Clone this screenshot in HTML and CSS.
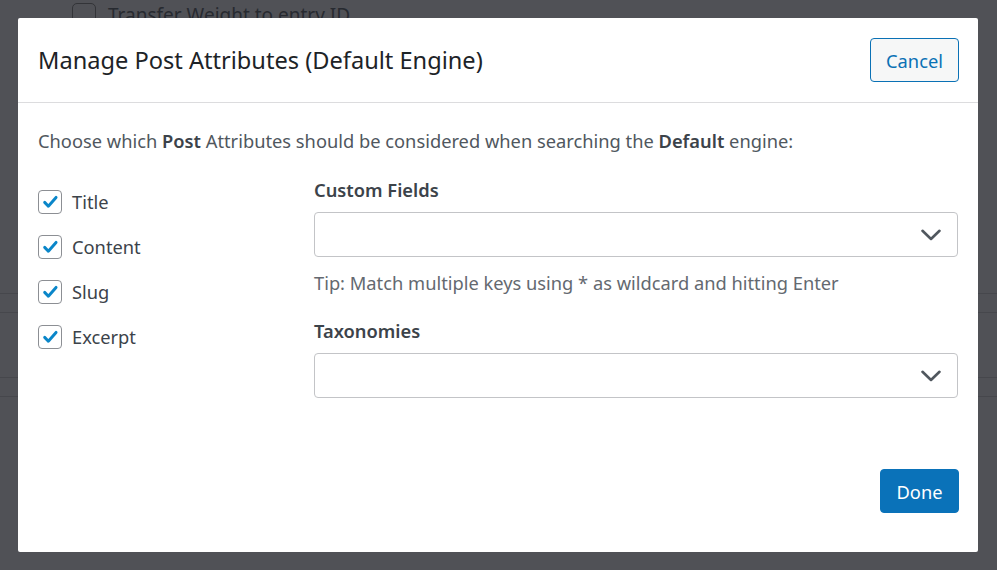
FILE: index.html
```html
<!DOCTYPE html>
<html>
<head>
<meta charset="utf-8">
<link rel="stylesheet" href="styles.css">
</head>
<body>
<div class="page">
  <div class="bg-row">
    <span class="bg-check"></span>
    <span class="bg-text">Transfer Weight to entry ID</span>
  </div>
  <div class="bg-lines">
    <div class="bg-line l1"></div>
    <div class="bg-line l2"></div>
    <div class="bg-line l3"></div>
    <div class="bg-line l4"></div>
  </div>
</div>

<div class="modal">
  <div class="modal-header">
    <h2 class="modal-title">Manage Post Attributes (Default Engine)</h2>
    <button class="btn btn-secondary">Cancel</button>
  </div>
  <div class="modal-body">
    <p class="intro">Choose which <strong>Post</strong> Attributes should be considered when searching the <strong>Default</strong> engine:</p>
    <div class="columns">
      <div class="attrs">
        <label class="attr"><span class="cb"><svg viewBox="0 0 24 24" width="24" height="24"><path d="M6.2 12.4 L10.2 16.6 L18.6 7" fill="none" stroke="#0a86c9" stroke-width="3.2" stroke-linecap="round" stroke-linejoin="round"/></svg></span>Title</label>
        <label class="attr"><span class="cb"><svg viewBox="0 0 24 24" width="24" height="24"><path d="M6.2 12.4 L10.2 16.6 L18.6 7" fill="none" stroke="#0a86c9" stroke-width="3.2" stroke-linecap="round" stroke-linejoin="round"/></svg></span>Content</label>
        <label class="attr"><span class="cb"><svg viewBox="0 0 24 24" width="24" height="24"><path d="M6.2 12.4 L10.2 16.6 L18.6 7" fill="none" stroke="#0a86c9" stroke-width="3.2" stroke-linecap="round" stroke-linejoin="round"/></svg></span>Slug</label>
        <label class="attr"><span class="cb"><svg viewBox="0 0 24 24" width="24" height="24"><path d="M6.2 12.4 L10.2 16.6 L18.6 7" fill="none" stroke="#0a86c9" stroke-width="3.2" stroke-linecap="round" stroke-linejoin="round"/></svg></span>Excerpt</label>
      </div>
      <div class="fields">
        <div class="field-label">Custom Fields</div>
        <div class="select"><svg class="chev" viewBox="0 0 20 12" width="20" height="12"><path d="M1.5 1.8 L10 10 L18.5 1.8" fill="none" stroke="#50575e" stroke-width="2.6" stroke-linecap="round" stroke-linejoin="round"/></svg></div>
        <div class="tip">Tip: Match multiple keys using * as wildcard and hitting Enter</div>
        <div class="field-label second">Taxonomies</div>
        <div class="select"><svg class="chev" viewBox="0 0 20 12" width="20" height="12"><path d="M1.5 1.8 L10 10 L18.5 1.8" fill="none" stroke="#50575e" stroke-width="2.6" stroke-linecap="round" stroke-linejoin="round"/></svg></div>
      </div>
    </div>
  </div>
  <div class="modal-footer">
    <button class="btn btn-primary">Done</button>
  </div>
</div>
</body>
</html>
```

FILE: styles.css
```css
* { box-sizing: border-box; }
html, body {
  margin: 0;
  padding: 0;
  width: 997px;
  height: 570px;
  overflow: hidden;
  background: #505156;
  font-family: "Noto Sans", "Open Sans", sans-serif;
}
.page {
  position: relative;
  width: 997px;
  height: 570px;
  background: #505156;
}
.bg-row {
  display: flex;
  align-items: flex-start;
  padding-left: 72px;
  padding-top: 3px;
  height: 28px;
}
.bg-check {
  width: 24px;
  height: 24px;
  border: 1px solid #333438;
  border-radius: 5px;
  margin-right: 12px;
}
.bg-text {
  font-size: 19px;
  line-height: 24px;
  color: #272a30;
}
.bg-lines {
  padding-top: 265px;
}
.bg-line {
  height: 1px;
  background: #46474c;
}
.l2 { margin-top: 18px; }
.l3 { margin-top: 64px; }
.l4 { margin-top: 18px; }

.modal {
  position: absolute;
  left: 18px;
  top: 18px;
  width: 960px;
  height: 534px;
  background: #fff;
  border-radius: 2px;
  display: flex;
  flex-direction: column;
}
.modal-header {
  display: flex;
  align-items: center;
  justify-content: space-between;
  padding: 20px 19px 20px 20px;
  border-bottom: 1px solid #dcdcde;
}
.modal-title {
  margin: 0;
  font-size: 23.6px;
  font-weight: 400;
  color: #1d2327;
}
.btn {
  font-family: inherit;
  font-size: 18.3px;
  height: 44px;
  border-radius: 4px;
  padding: 0;
  cursor: pointer;
}
.btn-secondary {
  width: 89px;
  background: #f6f7f7;
  border: 1px solid #0a71b5;
  color: #0a71b5;
}
.btn-primary {
  width: 79px;
  background: #0a72b9;
  border: 1px solid #0a72b9;
  color: #fff;
}
.modal-body {
  padding: 24px 20px 0 20px;
  flex: 1;
}
.intro {
  margin: 0;
  font-size: 18.3px;
  line-height: 27px;
  color: #50575e;
}
.intro strong {
  font-weight: 600;
  color: #3c434a;
}
.columns {
  display: grid;
  grid-template-columns: 276px 1fr;
  margin-top: 22px;
}
.attrs {
  display: flex;
  flex-direction: column;
  gap: 18px;
  padding-top: 12px;
}
.attr {
  display: flex;
  align-items: center;
  height: 27px;
  font-size: 18.3px;
  color: #3c434a;
}
.cb {
  width: 24px;
  height: 24px;
  border: 1px solid #8c8f94;
  border-radius: 4px;
  margin-right: 10px;
  display: flex;
  align-items: center;
  justify-content: center;
}
.cb svg { display: block; }
.field-label {
  font-size: 18.3px;
  line-height: 27px;
  font-weight: 600;
  color: #3c434a;
}
.field-label.second { margin-top: 21px; }
.select {
  margin-top: 9px;
  height: 45px;
  border: 1px solid #c3c4c7;
  border-radius: 4px;
  display: flex;
  align-items: center;
  justify-content: flex-end;
  padding-right: 16px;
}
.chev { display: block; }
.tip {
  margin-top: 12px;
  font-size: 18.3px;
  line-height: 27px;
  color: #646970;
}
.modal-footer {
  display: flex;
  justify-content: flex-end;
  padding: 0 19px 39px 20px;
}
```
